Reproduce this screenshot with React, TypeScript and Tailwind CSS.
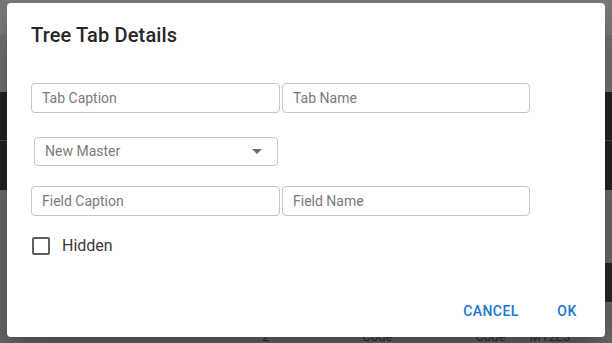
import React from 'react';

function TextBox({ placeholder, width }: { placeholder: string; width: string }) {
  return (
    <input
      readOnly
      placeholder={placeholder}
      className={`${width} h-[30px] rounded-[4px] border border-[#c4c4c4] bg-white px-[10px] text-[14px] text-[#333] placeholder:text-[#7a7a7a] outline-none`}
    />
  );
}

export default function App() {
  return (
    <div className="relative h-[343px] w-[612px] overflow-hidden font-['Roboto',sans-serif]">
      {/* page behind the backdrop */}
      <div className="flex h-full flex-col">
        <div className="h-[35px] bg-[#777777]" />
        <div className="h-[57px] bg-[#6d6d6d]" />
        <div className="h-[48px] bg-[#222222]" />
        <div className="h-px bg-[#4a4a4a]" />
        <div className="h-[49px] bg-[#222222]" />
        <div className="h-[9px] bg-[#6a6a6a]" />
        <div className="h-[64px] bg-[#666666]" />
        <div className="flex h-[39px] justify-end bg-[#666666]">
          <div className="w-[12px] bg-[#262626]" />
        </div>
        <div className="flex flex-1 items-end bg-[#666666] pb-0 text-[13px] leading-none text-[#2a2a2a]">
          <span className="ml-[262px]">2</span>
          <span className="ml-[93px]">Code</span>
          <span className="ml-[83px]">Code</span>
          <span className="ml-[24px]">M12E3</span>
        </div>
      </div>

      {/* dialog */}
      <div className="absolute left-[7px] top-[3px] flex h-[334px] w-[598px] flex-col rounded-[4px] bg-white shadow-[0_11px_15px_-7px_rgba(0,0,0,0.2),0_24px_38px_3px_rgba(0,0,0,0.14)]">
        <h2 className="px-[24px] pt-[16px] text-[20px] font-medium leading-[32px] tracking-[0.15px] text-[#262626]">
          Tree Tab Details
        </h2>

        <div className="mt-[32px] flex flex-col px-[24px]">
          <div className="flex gap-[2px]">
            <TextBox placeholder="Tab Caption" width="w-[249px]" />
            <TextBox placeholder="Tab Name" width="w-[248px]" />
          </div>

          <div className="ml-[3px] mt-[24px] flex h-[29px] w-[244px] items-center justify-between rounded-[4px] border border-[#c4c4c4] pl-[10px] pr-[15px] text-[14px] text-[#7a7a7a]">
            <span>New Master</span>
            <svg width="10" height="5" viewBox="0 0 10 5">
              <path d="M0 0h10L5 5z" fill="#6b6b6b" />
            </svg>
          </div>

          <div className="mt-[20px] flex gap-[2px]">
            <TextBox placeholder="Field Caption" width="w-[249px]" />
            <TextBox placeholder="Field Name" width="w-[248px]" />
          </div>

          <label className="ml-[1px] mt-[21px] flex items-center gap-[12px]">
            <span className="h-[18px] w-[18px] rounded-[2px] border-2 border-[#5f5f5f]" />
            <span className="text-[16px] leading-[18px] text-[#3a3a3a]">Hidden</span>
          </label>
        </div>

        <div className="mt-auto flex justify-end gap-[9px] pb-[8px] pr-[6px]">
          <button className="h-[36px] w-[70px] rounded-[4px] text-[14px] font-medium tracking-[0.4px] text-[#1976d2]">
            CANCEL
          </button>
          <button className="h-[36px] w-[64px] rounded-[4px] text-[14px] font-medium tracking-[0.4px] text-[#1976d2]">
            OK
          </button>
        </div>
      </div>
    </div>
  );
}
